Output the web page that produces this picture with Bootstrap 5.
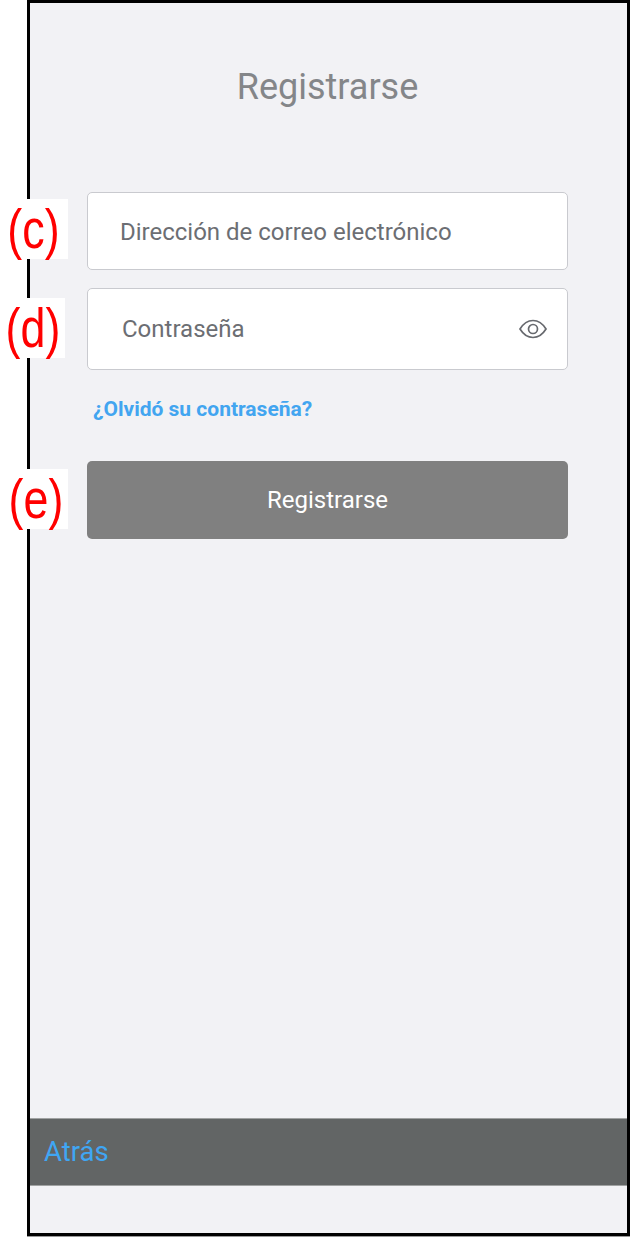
<!DOCTYPE html>
<html lang="es">
<head>
<meta charset="utf-8">
<title>Registrarse</title>
<link rel="stylesheet" href="https://cdn.jsdelivr.net/npm/bootstrap@5.3.0/dist/css/bootstrap.min.css">
<style>
html,body{background:#fff;height:100%;margin:0;}
body{font-family:Roboto,sans-serif;overflow:hidden;}
.shot-frame{position:relative;margin-left:27px;width:603px;height:1236px;border:3px solid #000;background:#f2f2f5;box-shadow:0 1px 0 #999;}
.form-area{padding:0 59px 0 57px;}
.screen-title{margin:0;padding-top:62px;height:189px;font-size:36px;line-height:44px;font-weight:400;color:#848689;text-align:center;}
.field-box{border:1px solid #c9cacf;border-radius:5px;background:#fff;color:#6c6e73;font-size:24px;line-height:30px;}
.field-mail{height:78px;padding:1px 32px 0;margin-bottom:18px;}
.field-pass{height:82px;padding:0 20px 0 34px;}
.forgot{display:block;margin:27px 0 0 6px;height:25px;font-size:21px;line-height:25px;font-weight:700;color:#42a5f0;text-decoration:none;}
.submit-btn{display:block;width:100%;height:78px;margin-top:39px;border:0;border-radius:5px;background:#808080;color:#fff;font-size:24px;}
.submit-btn:hover{background:#808080;color:#fff;}
.bottom-bar{position:absolute;left:0;right:0;top:1115px;height:68px;background:#626565;border-top:1px solid #a0a2a2;border-bottom:1px solid #a0a2a2;padding-left:14px;}
.back-link{color:#3fa6f4;font-size:27.5px;text-decoration:none;}
.callout{position:absolute;left:0;height:60px;background:#fff;color:#f00;font-family:"Liberation Sans",sans-serif;font-size:56px;line-height:60px;text-align:center;}
.callout-c{top:199px;width:68px;}
.callout-d{top:298px;width:65px;}
.callout-e{top:469px;width:68px;}
.callout span{display:block;transform:scaleX(.8);}
.callout-c span{margin-left:-1px;}
.callout-d span{margin-left:-1px;}
.callout-e span{margin-left:2px;}
</style>
</head>
<body>
<div class="shot-frame d-flex flex-column">
  <div class="form-area">
    <h1 class="screen-title">Registrarse</h1>
    <div class="field-box field-mail d-flex align-items-center">Dirección de correo electrónico</div>
    <div class="field-box field-pass d-flex align-items-center justify-content-between">
      <span>Contraseña</span>
      <svg width="28" height="20" viewBox="0 0 28 20" fill="none" stroke="#67696e" stroke-width="1.7" aria-hidden="true">
        <path d="M1 10C4.500 4.300 9 1.500 14 1.500S23.500 4.300 27 10C23.500 15.700 19 18.500 14 18.500S4.500 15.700 1 10Z"/>
        <circle cx="14" cy="10" r="4.500"/>
      </svg>
    </div>
    <a class="forgot" href="#">¿Olvidó su contraseña?</a>
    <button type="button" class="btn submit-btn">Registrarse</button>
  </div>
  <div class="bottom-bar d-flex align-items-center"><a class="back-link" href="#">Atrás</a></div>
</div>
<div class="callout callout-c"><span>(c)</span></div>
<div class="callout callout-d"><span>(d)</span></div>
<div class="callout callout-e"><span>(e)</span></div>
<script src="https://cdn.jsdelivr.net/npm/bootstrap@5.3.0/dist/js/bootstrap.bundle.min.js"></script>
</body>
</html>
